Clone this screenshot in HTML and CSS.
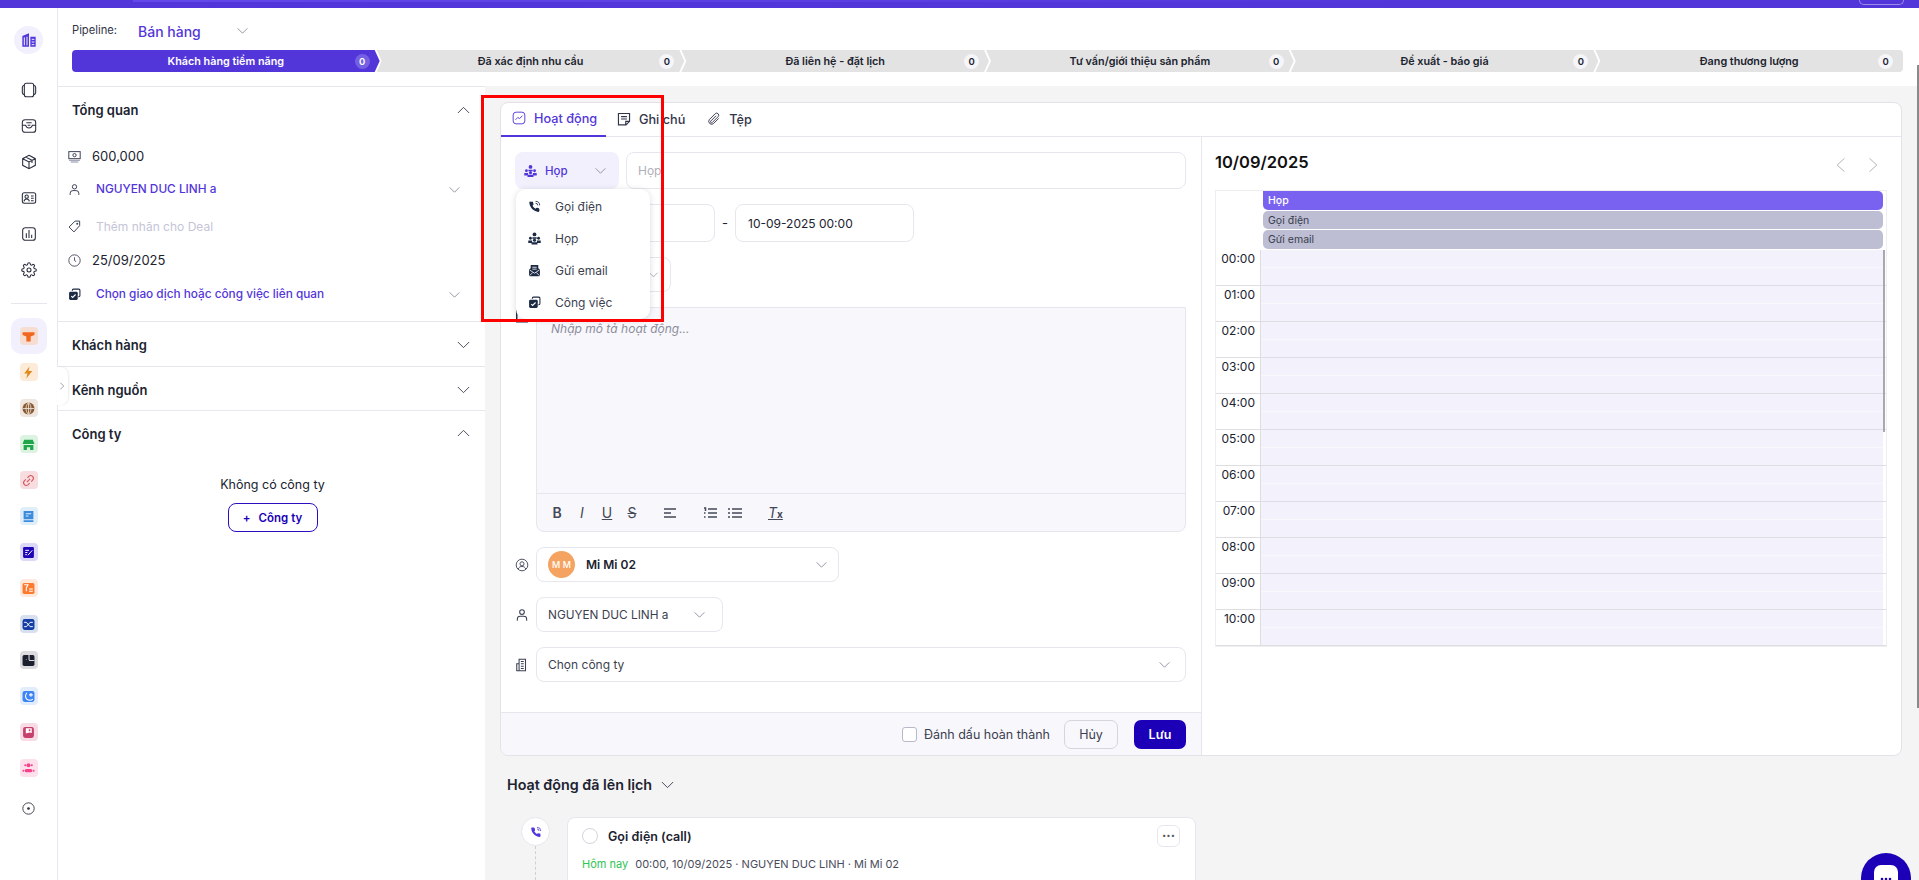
FILE: index.html
```html
<!DOCTYPE html>
<html lang="vi">
<head>
    <meta charset="UTF-8">
    <title>Deal - Bán hàng</title>
    <link rel="stylesheet" href="styles.css">
</head>
<body>
    <svg class="sprite" aria-hidden="true">
        <symbol id="chev" viewBox="0 0 24 24"><path d="M3 8l9 9 9-9" fill="none" stroke="currentColor" stroke-width="1.5"/></symbol>
        <symbol id="phone" viewBox="0 0 24 24"><path fill="currentColor" d="M21 17v3a2 2 0 0 1-2.2 2 18 18 0 0 1-8-2.9 18 18 0 0 1-5.5-5.5A18 18 0 0 1 2.4 5.2 2 2 0 0 1 4.4 3h3a2 2 0 0 1 2 1.7c.1 1 .4 1.8.7 2.600a2 2 0 0 1-.5 2.100L8.400 10.600a15 15 0 0 0 5.500 5.500l1.200-1.200a2 2 0 0 1 2.100-.5c.8.3 1.700.6 2.600.7A2 2 0 0 1 21 17z"/><path fill="none" stroke="currentColor" stroke-width="1.6" d="M14 2.500a7.500 7.500 0 0 1 7.500 7.500M14 6a4 4 0 0 1 4 4"/></symbol>
        <symbol id="meet" viewBox="0 0 24 24"><g fill="currentColor"><circle cx="12" cy="4.500" r="3.500"/><path d="M8 9.500h8v3H8z"/><circle cx="4.500" cy="11.500" r="2.600"/><circle cx="19.500" cy="11.500" r="2.600"/><circle cx="12" cy="15" r="2.800"/><path d="M0.500 15.500h7v5h-7zM16.500 15.500h7v5h-7zM6.500 19h11v4h-11z"/></g></symbol>
        <symbol id="mail" viewBox="0 0 24 24"><path fill="currentColor" d="M5 2h14v6l3 2v11a1.500 1.500 0 0 1-1.500 1.500h-17A1.500 1.500 0 0 1 2 21V10l3-2z"/><path fill="none" stroke="#fff" stroke-width="1.500" d="M8 6h8M8 9.500h8M3 11l9 6 9-6M3 21.500l6-6M21 21.500l-6-6"/></symbol>
        <symbol id="task" viewBox="0 0 24 24"><path fill="none" stroke="currentColor" stroke-width="2" d="M8 5V4a2 2 0 0 1 2-2h10a2 2 0 0 1 2 2v10a2 2 0 0 1-2 2h-1"/><rect x="2" y="7" width="16" height="15" rx="2.500" fill="currentColor"/><path fill="none" stroke="#fff" stroke-width="2" d="M6 15l2.500 2.500L14 12"/></symbol>
        <symbol id="user" viewBox="0 0 24 24"><g fill="none" stroke="currentColor" stroke-width="1.800"><circle cx="12" cy="7" r="4"/><path d="M4 22v-3a5 5 0 0 1 5-5h6a5 5 0 0 1 5 5v3"/></g></symbol>
    </svg>

    <div class="app">
        <div class="topbar">
            <div class="topbar-strip"></div>
            <div class="topbar-btn"></div>
        </div>

        <div class="shell">
            <nav class="rail">
                <div class="rail-logo">
                    <svg width="16" height="16" viewBox="0 0 24 24"><path fill="#5236d9" d="M2 6l10-4v20H2zM14 7h8v15h-8z"/><path stroke="#f1f0fc" stroke-width="1.500" d="M5 8v12M9 7v13M16 11h4M16 15h4M16 19h4"/></svg>
                </div>
                <div class="rail-group">
                    <svg class="rail-icon" viewBox="0 0 24 24"><rect x="5" y="2" width="14" height="20" rx="3"/><path d="M5 5a3.500 3.500 0 0 0-3 3v8a3.500 3.500 0 0 0 3 3M19 5a3.500 3.500 0 0 1 3 3v8a3.500 3.500 0 0 1-3 3"/></svg>
                    <svg class="rail-icon" viewBox="0 0 24 24"><rect x="2" y="2.500" width="20" height="19" rx="4"/><path d="M2 11h5c1 3 2.500 4 5 4s4-1 5-4h5M8 7h8M10 11h4"/></svg>
                    <svg class="rail-icon" viewBox="0 0 24 24"><path d="M12 2l9.500 5v10L12 22l-9.500-5V7zM2.500 7l9.500 5 9.500-5M12 12v10M7 4.500l9.500 5v4"/></svg>
                    <svg class="rail-icon" viewBox="0 0 24 24"><rect x="2" y="4" width="20" height="16" rx="3"/><circle cx="8.500" cy="10" r="2.500"/><path d="M4.500 17c.5-2.500 2-3.500 4-3.500s3.500 1 4 3.500M15 9h4M15 12.500h4M15 16h4"/></svg>
                    <svg class="rail-icon" viewBox="0 0 24 24"><rect x="2.500" y="2.500" width="19" height="19" rx="4"/><path d="M8 11v7M12 6v12M16 13v5"/></svg>
                    <svg class="rail-icon" viewBox="0 0 24 24"><circle cx="12" cy="12" r="3"/><path d="M19.400 15a1.650 1.650 0 0 0 .33 1.820l.06.06a2 2 0 0 1-2.830 2.830l-.06-.06a1.650 1.650 0 0 0-1.820-.33 1.650 1.650 0 0 0-1 1.510V21a2 2 0 0 1-4 0v-.09A1.650 1.650 0 0 0 9 19.400a1.650 1.650 0 0 0-1.820.33l-.06.06a2 2 0 0 1-2.830-2.830l.06-.06a1.650 1.650 0 0 0 .33-1.820 1.650 1.650 0 0 0-1.510-1H3a2 2 0 0 1 0-4h.09A1.650 1.650 0 0 0 4.600 9a1.650 1.650 0 0 0-.33-1.820l-.06-.06a2 2 0 0 1 2.830-2.830l.06.06a1.650 1.650 0 0 0 1.820.33H9a1.650 1.650 0 0 0 1-1.510V3a2 2 0 0 1 4 0v.09a1.650 1.650 0 0 0 1 1.510 1.650 1.650 0 0 0 1.820-.33l.06-.06a2 2 0 0 1 2.830 2.830l-.06.06a1.650 1.650 0 0 0-.33 1.820V9a1.650 1.650 0 0 0 1.510 1H21a2 2 0 0 1 0 4h-.09a1.650 1.650 0 0 0-1.510 1z"/></svg>
                </div>
                <div class="rail-divider"></div>
                <div class="rail-apps">
                    <div class="app-active"><span class="app-tile tile-orange"><svg viewBox="0 0 24 24"><path fill="currentColor" d="M1 4h22v5l-7 3v9H8v-9L1 9z"/></svg></span></div>
                    <span class="app-tile tile-amber"><svg viewBox="0 0 24 24"><path fill="currentColor" d="M14 1L4 14h6l-2 9 11-14h-7z"/></svg></span>
                    <span class="app-tile tile-brown"><svg viewBox="0 0 24 24"><circle cx="12" cy="12" r="11" fill="currentColor"/><path fill="none" stroke="#efe6df" stroke-width="1.500" d="M12 1v22M1 12h22M12 1c-6 5-6 17 0 22M12 1c6 5 6 17 0 22"/></svg></span>
                    <span class="app-tile tile-green"><svg viewBox="0 0 24 24"><path fill="currentColor" d="M4 3h16l3 8H1zM3 13h18v9h-6v-5H9v5H3z"/></svg></span>
                    <span class="app-tile tile-red"><svg viewBox="0 0 24 24"><path fill="none" stroke="currentColor" stroke-width="2" d="M10 7l3-3a5 5 0 0 1 7 7l-3 3M14 17l-3 3a5 5 0 0 1-7-7l3-3M9 15l6-6"/></svg></span>
                    <span class="app-tile tile-blue"><svg viewBox="0 0 24 24"><path fill="currentColor" d="M3 2h18v15H3zM3 19h18v3H3z"/><path stroke="#e0eefa" stroke-width="2" d="M7 7h10M7 11h5"/></svg></span>
                    <span class="app-tile tile-indigo"><svg viewBox="0 0 24 24"><rect x="2" y="2" width="20" height="20" rx="2" fill="currentColor"/><path fill="none" stroke="#fff" stroke-width="1.800" d="M6 8h7M6 12h4M6 16h3M11 17l8-9"/></svg></span>
                    <span class="app-tile tile-peach"><svg viewBox="0 0 24 24"><rect x="1" y="2" width="22" height="20" rx="3" fill="currentColor"/><path fill="none" stroke="#fff" stroke-width="2" d="M4 5h7l-3 6v6M13 13h7M13 17h7"/></svg></span>
                    <span class="app-tile tile-navy"><svg viewBox="0 0 24 24"><rect x="1" y="2" width="22" height="20" rx="4" fill="currentColor"/><path fill="none" stroke="#fff" stroke-width="1.800" d="M4 8h4l7 8h5M4 16h4l7-8h5"/></svg></span>
                    <span class="app-tile tile-dark"><svg viewBox="0 0 24 24"><rect x="1" y="2" width="22" height="20" rx="3" fill="currentColor"/><path stroke="#dcdcde" stroke-width="2" d="M13 2v9M13 12h10M8 10v1"/></svg></span>
                    <span class="app-tile tile-sky"><svg viewBox="0 0 24 24"><rect x="1" y="2" width="22" height="20" rx="4" fill="currentColor"/><path fill="none" stroke="#fff" stroke-width="2" d="M9 5c-3 4-3 9 0 12 3 2 8 2 11 0M13 9h7M16.500 5.500v7"/></svg></span>
                    <span class="app-tile tile-rose"><svg viewBox="0 0 24 24"><rect x="2" y="2" width="20" height="20" rx="4" fill="currentColor"/><path fill="#fff" d="M7 4h11v9l-4-1-7 2z"/><circle cx="14" cy="8" r="1.800" fill="#c73f6e"/></svg></span>
                    <span class="app-tile tile-pink"><svg viewBox="0 0 24 24"><g fill="currentColor"><circle cx="12" cy="6" r="3.500"/><circle cx="6" cy="6" r="2"/><circle cx="18" cy="6" r="2"/><rect x="5" y="13" width="14" height="6" rx="3"/><circle cx="2.500" cy="16" r="1.800"/><circle cx="21.500" cy="16" r="1.800"/></g></svg></span>
                </div>
                <svg class="rail-add" viewBox="0 0 24 24"><circle cx="12" cy="12" r="10.500" fill="none" stroke="currentColor" stroke-width="1.600"/><circle cx="12" cy="12" r="2.500" fill="currentColor"/></svg>
            </nav>

            <div class="content">
                <header class="pipeline">
                    <div class="pipeline-pick">
                        <span class="pipeline-label">Pipeline:</span>
                        <span class="pipeline-name">Bán hàng</span>
                        <svg class="chev-sm"><use href="#chev"/></svg>
                    </div>
                    <div class="stages">
                        <div class="stage stage-active"><span>Khách hàng tiềm năng</span><b>0</b></div>
                        <div class="stage"><span>Đã xác định nhu cầu</span><b>0</b></div>
                        <div class="stage"><span>Đã liên hệ - đặt lịch</span><b>0</b></div>
                        <div class="stage"><span>Tư vấn/giới thiệu sản phẩm</span><b>0</b></div>
                        <div class="stage"><span>Đề xuất - báo giá</span><b>0</b></div>
                        <div class="stage stage-last"><span>Đang thương lượng</span><b>0</b></div>
                    </div>
                </header>

                <div class="workspace">
                    <aside class="side">
                        <section class="side-sec sec-overview">
                            <div class="sec-head"><h3>Tổng quan</h3><svg class="chev-md up"><use href="#chev"/></svg></div>
                            <div class="info-row row-amount">
                                <svg class="info-icon" viewBox="0 0 24 24"><g fill="none" stroke="#3a3f52" stroke-width="1.800"><rect x="1.500" y="3" width="21" height="13"/><circle cx="12" cy="9.500" r="3"/></g><path stroke="#8a8fa3" stroke-width="2" d="M2 19h20M5 22h14"/></svg>
                                <span>600,000</span>
                            </div>
                            <div class="info-row row-contact">
                                <svg class="info-icon"><use href="#user"/></svg>
                                <span class="info-link">NGUYEN DUC LINH a</span>
                                <svg class="chev-sm"><use href="#chev"/></svg>
                            </div>
                            <div class="info-row row-tag">
                                <svg class="info-icon" viewBox="0 0 24 24"><path fill="none" stroke="#3a3f52" stroke-width="1.800" d="M13 2h8.500v8.500L11 22 2 13z"/><circle cx="17" cy="7" r="1.800" fill="#3a3f52"/></svg>
                                <span class="info-muted">Thêm nhãn cho Deal</span>
                            </div>
                            <div class="info-row row-date">
                                <svg class="info-icon" viewBox="0 0 24 24"><circle cx="12" cy="12" r="10.500" fill="none" stroke="#3a3f52" stroke-width="1.600"/><path fill="none" stroke="#3a3f52" stroke-width="1.600" d="M12 6v6l3 2"/></svg>
                                <span>25/09/2025</span>
                            </div>
                            <div class="info-row row-related">
                                <svg class="info-icon icon-dark"><use href="#task"/></svg>
                                <span class="info-link">Chọn giao dịch hoặc công việc liên quan</span>
                                <svg class="chev-sm"><use href="#chev"/></svg>
                            </div>
                        </section>
                        <section class="side-sec">
                            <div class="sec-head"><h3>Khách hàng</h3><svg class="chev-md"><use href="#chev"/></svg></div>
                        </section>
                        <section class="side-sec sec-source">
                            <div class="sec-head"><h3>Kênh nguồn</h3><svg class="chev-md"><use href="#chev"/></svg></div>
                        </section>
                        <section class="side-sec sec-company">
                            <div class="sec-head"><h3>Công ty</h3><svg class="chev-md up"><use href="#chev"/></svg></div>
                            <div class="empty-company">
                                <p>Không có công ty</p>
                                <button class="btn-outline"><span>+</span>Công ty</button>
                            </div>
                        </section>
                        <div class="side-handle"><svg class="chev-xs" viewBox="0 0 24 24"><path d="M8 4l8 8-8 8" fill="none" stroke="currentColor" stroke-width="2"/></svg></div>
                    </aside>

                    <main class="main">
                        <div class="card">
                            <div class="tabs">
                                <div class="tab tab-active">
                                    <svg viewBox="0 0 24 24"><rect x="2" y="2" width="20" height="20" rx="5" fill="none" stroke="currentColor" stroke-width="1.600"/><path d="M6 15l4-4 3 2 5-5" fill="none" stroke="currentColor" stroke-width="1.600"/></svg>
                                    Hoạt động
                                </div>
                                <div class="tab">
                                    <svg viewBox="0 0 24 24"><path d="M2.500 2.500h19V16l-6 6h-13zM15 22v-6h6.500M7 8h10M7 12h10" fill="none" stroke="currentColor" stroke-width="2"/></svg>
                                    Ghi chú
                                </div>
                                <div class="tab">
                                    <svg viewBox="0 0 24 24"><path d="M20 11l-9 9a5 5 0 0 1-7-7l10-10a3.300 3.300 0 0 1 5 5L9 18a1.600 1.600 0 0 1-2.500-2.500l9-9" fill="none" stroke="currentColor" stroke-width="1.600"/></svg>
                                    Tệp
                                </div>
                            </div>
                            <div class="card-body">
                                <div class="form-col">
                                    <div class="form">
                                        <div class="form-row">
                                            <div class="type-wrap">
                                                <div class="type-btn">
                                                    <svg class="type-icon"><use href="#meet"/></svg>
                                                    <span>Họp</span>
                                                    <svg class="chev-sm"><use href="#chev"/></svg>
                                                </div>
                                                <ul class="type-menu">
                                                    <li><svg><use href="#phone"/></svg>Gọi điện</li>
                                                    <li><svg><use href="#meet"/></svg>Họp</li>
                                                    <li><svg><use href="#mail"/></svg>Gửi email</li>
                                                    <li><svg><use href="#task"/></svg>Công việc</li>
                                                </ul>
                                            </div>
                                            <div class="input input-title">Họp</div>
                                        </div>
                                        <div class="form-row row-dates">
                                            <div class="input input-date date-start">10-09-2025 00:00</div>
                                            <span class="date-sep">-</span>
                                            <div class="input input-date">10-09-2025 00:00</div>
                                        </div>
                                        <div class="form-row row-guest">
                                            <div class="input input-short"><svg class="chev-xs-down"><use href="#chev"/></svg></div>
                                        </div>
                                        <div class="form-row row-editor">
                                            <svg class="field-icon field-note" viewBox="0 0 24 24"><path d="M3 2h14l4 4v16H3z" fill="none" stroke="currentColor" stroke-width="2.500"/></svg>
                                            <div class="editor">
                                                <div class="editor-text">Nhập mô tả hoạt động...</div>
                                                <div class="editor-tools">
                                                    <span class="tool tool-b">B</span>
                                                    <span class="tool tool-i">I</span>
                                                    <span class="tool tool-u">U</span>
                                                    <span class="tool tool-s">S</span>
                                                    <svg class="tool-svg gap-left" viewBox="0 0 14 14"><path d="M1 3h12M1 7h7M1 11h12" stroke="currentColor" stroke-width="1.500"/></svg>
                                                    <svg class="tool-svg gap-wide" viewBox="0 0 14 14"><path d="M5 3h9M5 7h9M5 11h9M1 2h1.500v3M1 7h1.500M1 11h1.500" stroke="currentColor" stroke-width="1.500" fill="none"/></svg>
                                                    <svg class="tool-svg" viewBox="0 0 14 14"><path d="M4 3h10M4 7h10M4 11h10M0 3h2M0 7h2M0 11h2" stroke="currentColor" stroke-width="1.500"/></svg>
                                                    <span class="tool tool-clear">T<small>x</small></span>
                                                </div>
                                            </div>
                                        </div>
                                        <div class="form-row">
                                            <svg class="field-icon" viewBox="0 0 24 24"><circle cx="12" cy="12" r="10" fill="none" stroke="currentColor" stroke-width="1.500"/><circle cx="12" cy="10" r="3.500" fill="none" stroke="currentColor" stroke-width="1.500"/><path d="M5.500 19c1-3 3.500-4.500 6.500-4.500s5.500 1.500 6.500 4.500" fill="none" stroke="currentColor" stroke-width="1.500"/></svg>
                                            <div class="input input-owner">
                                                <span class="avatar">M M</span>
                                                <strong>Mi Mi 02</strong>
                                                <svg class="chev-sm"><use href="#chev"/></svg>
                                            </div>
                                        </div>
                                        <div class="form-row">
                                            <svg class="field-icon"><use href="#user"/></svg>
                                            <div class="input input-contact">
                                                <span>NGUYEN DUC LINH a</span>
                                                <svg class="chev-sm"><use href="#chev"/></svg>
                                            </div>
                                        </div>
                                        <div class="form-row">
                                            <svg class="field-icon" viewBox="0 0 24 24"><path d="M7 2h11v20H7zM3 10h4v12H3zM10 6h5M10 10h5M10 14h5M10 18h5" fill="none" stroke="currentColor" stroke-width="1.800"/></svg>
                                            <div class="input input-company">
                                                <span>Chọn công ty</span>
                                                <svg class="chev-sm"><use href="#chev"/></svg>
                                            </div>
                                        </div>
                                    </div>
                                    <div class="form-foot">
                                        <label class="check"><i></i>Đánh dấu hoàn thành</label>
                                        <button class="btn-cancel">Hủy</button>
                                        <button class="btn-save">Lưu</button>
                                    </div>
                                </div>

                                <div class="calendar">
                                    <div class="cal-head">
                                        <h2>10/09/2025</h2>
                                        <div class="cal-nav">
                                            <svg viewBox="0 0 16 24"><path d="M14 2L3 12l11 10" fill="none" stroke="currentColor" stroke-width="1.300"/></svg>
                                            <svg viewBox="0 0 16 24"><path d="M2 2l11 10L2 22" fill="none" stroke="currentColor" stroke-width="1.300"/></svg>
                                        </div>
                                    </div>
                                    <div class="cal-grid">
                                        <div class="all-day">
                                            <div class="event event-on">Họp</div>
                                            <div class="event">Gọi điện</div>
                                            <div class="event">Gửi email</div>
                                        </div>
                                        <div class="hour"><span>00:00</span><div class="slots"></div></div>
                                        <div class="hour"><span>01:00</span><div class="slots"></div></div>
                                        <div class="hour"><span>02:00</span><div class="slots"></div></div>
                                        <div class="hour"><span>03:00</span><div class="slots"></div></div>
                                        <div class="hour"><span>04:00</span><div class="slots"></div></div>
                                        <div class="hour"><span>05:00</span><div class="slots"></div></div>
                                        <div class="hour"><span>06:00</span><div class="slots"></div></div>
                                        <div class="hour"><span>07:00</span><div class="slots"></div></div>
                                        <div class="hour"><span>08:00</span><div class="slots"></div></div>
                                        <div class="hour"><span>09:00</span><div class="slots"></div></div>
                                        <div class="hour"><span>10:00</span><div class="slots"></div></div>
                                        <div class="cal-scroll"></div>
                                    </div>
                                </div>
                            </div>
                        </div>

                        <h4 class="sched-title">Hoạt động đã lên lịch <svg class="chev-md"><use href="#chev"/></svg></h4>
                        <div class="sched-item">
                            <div class="sched-rail">
                                <span class="sched-dot"><svg><use href="#phone"/></svg></span>
                                <span class="sched-line"></span>
                            </div>
                            <div class="sched-card">
                                <div class="sched-top">
                                    <i class="radio"></i>
                                    <strong>Gọi điện (call)</strong>
                                    <span class="more">&middot;&middot;&middot;</span>
                                </div>
                                <div class="sched-meta"><em>Hôm nay</em>00:00, 10/09/2025 · NGUYEN DUC LINH · Mi Mi 02</div>
                            </div>
                        </div>
                    </main>
                </div>
            </div>
        </div>

        <!-- overlays -->
        <div class="page-scroll"></div>
        <div class="chat-bubble">
            <svg width="24" height="24" viewBox="0 0 24 24"><rect width="24" height="24" rx="7" fill="#fff"/><g fill="#1b00b8"><circle cx="8" cy="14" r="1.300"/><circle cx="12" cy="14" r="1.300"/><circle cx="16" cy="14" r="1.300"/></g></svg>
        </div>
        <div class="red-box"></div>
    </div>
</body>
</html>
```

FILE: styles.css
```css
* {
    box-sizing: border-box;
}
html, body {
    margin: 0;
    height: 100%;
    overflow: hidden;
}
body {
    font-family: Inter, "Noto Sans", sans-serif;
    font-size: 13px;
    color: #20232f;
    background: #fff;
}
h2, h3, h4, p, ul {
    margin: 0;
    padding: 0;
}
button {
    font-family: inherit;
    cursor: pointer;
}
.sprite {
    display: none;
}
.up {
    transform: rotate(180deg);
}
.chev-sm {
    width: 13px;
    height: 13px;
    color: #7d8192;
    flex: none;
}
.chev-md {
    width: 15px;
    height: 15px;
    color: #3f4354;
    flex: none;
}

.app {
    position: relative;
    height: 880px;
    display: flex;
    flex-direction: column;
    overflow: hidden;
}

/* top bar */
.topbar {
    height: 8px;
    flex: none;
    background: #5236d9;
    display: flex;
    align-items: flex-start;
}
.topbar-strip {
    flex: 1;
    height: 2px;
    margin-left: 133px;
    margin-right: 400px;
    background: linear-gradient(90deg, #6449ea, #5236d9);
}
.topbar-btn {
    width: 45px;
    height: 5px;
    margin-right: 15px;
    border: 1px solid #9a8ce8;
    border-top: 0;
    border-radius: 0 0 10px 10px;
}
.shell {
    flex: 1;
    display: flex;
    min-height: 0;
}

/* left rail */
.rail {
    width: 58px;
    flex: none;
    border-right: 1px solid #e6e6ef;
    display: flex;
    flex-direction: column;
    align-items: center;
    padding-top: 18px;
}
.rail-logo {
    width: 29px;
    height: 28px;
    border-radius: 50%;
    background: #f1f0fc;
    display: flex;
    align-items: center;
    justify-content: center;
}
.rail-group {
    display: flex;
    flex-direction: column;
    gap: 20px;
    margin-top: 28px;
}
.rail-icon {
    display: block;
    width: 16px;
    height: 16px;
    fill: none;
    stroke: #2b2f3e;
    stroke-width: 1.6;
}
.rail-divider {
    width: 36px;
    height: 1px;
    background: #e6e6ef;
    margin-top: 25px;
}
.rail-apps {
    display: flex;
    flex-direction: column;
    align-items: center;
    gap: 18px;
    margin-top: 14px;
}
.app-active {
    width: 36px;
    height: 36px;
    margin-bottom: -9px;
    border-radius: 10px;
    background: #f1f0fc;
    display: flex;
    align-items: center;
    justify-content: center;
}
.app-tile {
    width: 18px;
    height: 18px;
    flex: none;
    border-radius: 4px;
    display: flex;
    align-items: center;
    justify-content: center;
}
.app-tile svg {
    width: 13px;
    height: 13px;
}
.tile-orange { color: #f0671e; background: #f6ddd2; }
.tile-amber { color: #e08a1e; background: #fbebd8; }
.tile-brown { color: #8a5a32; background: #efe6df; }
.tile-green { color: #1fa64a; background: #dcf3e2; }
.tile-red { color: #d9535b; background: #f8dde0; }
.tile-blue { color: #3d8bdc; background: #e0eefa; }
.tile-indigo { color: #1f05b8; background: #dcd8f7; }
.tile-peach { color: #ff7a2e; background: #ffe8dc; }
.tile-navy { color: #123ea6; background: #d8e0f0; }
.tile-dark { color: #1b1f2e; background: #dcdcde; }
.tile-sky { color: #3d85f5; background: #e1ecfd; }
.tile-rose { color: #c73f6e; background: #f7dbe5; }
.tile-pink { color: #f5428a; background: #fde0ec; }
.rail-add {
    width: 13px;
    height: 13px;
    margin-top: 25px;
    color: #2b2f3e;
}

/* pipeline header */
.content {
    flex: 1;
    min-width: 0;
    display: flex;
    flex-direction: column;
}
.pipeline {
    height: 78px;
    flex: none;
    padding: 12px 16px 0 14px;
}
.pipeline-pick {
    display: flex;
    align-items: center;
    height: 20px;
}
.pipeline-label {
    width: 66px;
    font-size: 11.2px;
    color: #33364a;
}
.pipeline-name {
    width: 98px;
    padding-top: 2px;
    font-size: 14px;
    font-weight: 500;
    color: #5236d9;
}
.stages {
    display: flex;
    margin-top: 10px;
    height: 22px;
}
.stage {
    flex: 1;
    margin-left: -3px;
    padding: 0 12px;
    position: relative;
    display: flex;
    align-items: center;
    justify-content: center;
    font-size: 10.8px;
    font-weight: 600;
    color: #20232f;
    background: #e3e3e3;
    clip-path: polygon(0 0, calc(100% - 5px) 0, 100% 50%, calc(100% - 5px) 100%, 0 100%, 5px 50%);
}
.stage b {
    position: absolute;
    right: 10px;
    top: 3.5px;
    width: 15px;
    height: 15px;
    border-radius: 50%;
    background: #f5f5fa;
    font-size: 9.5px;
    font-weight: 600;
    line-height: 15px;
    text-align: center;
}
.stage-active {
    margin-left: 0;
    color: #fff;
    background: #5236d9;
    border-radius: 4px 0 0 4px;
    clip-path: polygon(0 0, calc(100% - 5px) 0, 100% 50%, calc(100% - 5px) 100%, 0 100%);
}
.stage-active b {
    background: #7560e4;
    color: #fff;
}
.stage-last {
    border-radius: 0 4px 4px 0;
    clip-path: polygon(0 0, 100% 0, 100% 100%, 0 100%, 5px 50%);
}

.workspace {
    flex: 1;
    display: flex;
    min-height: 0;
}

/* left panel */
.side {
    width: 427px;
    flex: none;
    position: relative;
    border-top: 1px solid #e6e6ef;
    background: #fff;
}
.side-sec {
    border-bottom: 1px solid #e6e6ef;
    height: 45px;
    padding: 0 14px;
}
.sec-overview {
    height: 235px;
}
.sec-source {
    height: 44px;
}
.sec-company {
    border-bottom: 0;
    height: auto;
}
.sec-head {
    height: 44px;
    padding-top: 1px;
    display: flex;
    align-items: center;
    justify-content: space-between;
}
.sec-overview .sec-head {
    height: 46px;
    padding-top: 0;
}
.sec-head h3 {
    font-size: 13px;
    font-weight: 600;
    color: #20232f;
}
.info-row {
    display: flex;
    align-items: center;
    height: 20px;
    margin-left: -4px;
}
.info-icon {
    width: 13px;
    height: 13px;
    color: #3a3f52;
    flex: none;
    margin-right: 11px;
}
.icon-dark {
    color: #1c2a44;
}
.row-amount {
    margin-top: 13px;
}
.row-contact {
    margin-top: 13px;
}
.row-tag {
    margin-top: 17px;
}
.row-date {
    margin-top: 14px;
}
.row-related {
    margin-top: 14px;
}
.row-contact .info-icon,
.row-tag .info-icon,
.row-related .info-icon {
    margin-right: 15px;
}
.info-link {
    flex: 1;
    font-size: 11.8px;
    font-weight: 500;
    color: #5236d9;
}
.info-muted {
    font-size: 12px;
    color: #c5c5d8;
}
.info-row .chev-sm {
    margin-right: 10px;
}
.empty-company {
    display: flex;
    flex-direction: column;
    align-items: center;
    padding-top: 20px;
    padding-left: 2px;
}
.empty-company p {
    font-size: 12.5px;
    line-height: 20px;
}
.btn-outline {
    margin-top: 8px;
    width: 90px;
    height: 29px;
    border: 1.5px solid #2a0fc0;
    border-radius: 8px;
    background: #fff;
    color: #1b00b8;
    font-size: 11.5px;
    font-weight: 600;
}
.btn-outline span {
    margin-right: 8px;
}
.side-handle {
    position: absolute;
    left: -1px;
    top: 280px;
    width: 11px;
    height: 38px;
    background: #fff;
    border-radius: 0 8px 8px 0;
    box-shadow: 1px 0 2px rgba(0, 0, 0, .08);
    display: flex;
    align-items: center;
    color: #8b8fa0;
}
.chev-xs {
    width: 10px;
    height: 10px;
}

/* main area */
.main {
    flex: 1;
    min-width: 0;
    background: #f4f4f5;
    padding: 16px 17px 0 15px;
}
.card {
    height: 654px;
    background: #fff;
    border: 1px solid #e2e2e8;
    border-radius: 8px;
    display: flex;
    flex-direction: column;
    overflow: hidden;
}
.tabs {
    height: 34px;
    flex: none;
    display: flex;
    border-bottom: 1px solid #e6e6ef;
}
.tab {
    display: flex;
    align-items: center;
    gap: 8px;
    height: 34px;
    padding: 0 11px 2px;
    font-size: 12.7px;
    font-weight: 500;
    color: #33364a;
    white-space: nowrap;
}
.tab svg {
    width: 14px;
    height: 14px;
    flex: none;
}
.tab-active {
    color: #5236d9;
    border-bottom: 2px solid #5236d9;
    width: 105px;
}
.card-body {
    flex: 1;
    display: flex;
    min-height: 0;
}
.form-col {
    width: 700px;
    flex: none;
    display: flex;
    flex-direction: column;
}
.form {
    flex: 1;
    display: flex;
    flex-direction: column;
    gap: 15px;
    padding: 15px 15px 0 14px;
}
.form-row {
    display: flex;
    align-items: center;
}
.type-wrap {
    position: relative;
    width: 104px;
    flex: none;
}
.type-btn {
    height: 37px;
    display: flex;
    align-items: center;
    padding: 0 12px 0 9px;
    border-radius: 8px;
    background: #f1f0fc;
    color: #5236d9;
    font-size: 11.5px;
    font-weight: 500;
}
.type-icon {
    width: 13px;
    height: 14px;
    margin-right: 8px;
}
.type-btn span {
    flex: 1;
}
.type-menu {
    position: absolute;
    left: 1px;
    top: 37px;
    z-index: 5;
    width: 134px;
    height: 130px;
    list-style: none;
    background: #fff;
    border-radius: 10px;
    box-shadow: 0 1px 6px rgba(30, 30, 70, .16);
    padding: 1px 0 0;
}
.type-menu li {
    height: 32px;
    display: flex;
    align-items: center;
    padding-left: 12px;
    font-size: 12px;
    color: #3d3f50;
}
.type-menu svg {
    width: 13px;
    height: 13px;
    margin-right: 14px;
    color: #1c2a44;
}
.input {
    height: 35px;
    border: 1px solid #e6e6ef;
    border-radius: 8px;
    background: #fff;
    display: flex;
    align-items: center;
    font-size: 12px;
}
.input-title {
    flex: 1;
    height: 37px;
    margin-left: 7px;
    padding-left: 11px;
    color: #b0b0b8;
}
.row-dates,
.row-guest,
.row-editor {
    padding-left: 21px;
}
.row-editor {
    position: relative;
}
.input-date {
    width: 179px;
    height: 38px;
    padding-left: 12px;
    color: #20232f;
}
.date-start {
    padding-left: 8px;
}
.date-sep {
    width: 20px;
    text-align: center;
}
.input-short {
    width: 135px;
    justify-content: flex-end;
    padding-right: 11px;
}
.chev-xs-down {
    width: 11px;
    height: 11px;
    color: #8b8fa0;
}
.field-icon {
    width: 14px;
    height: 14px;
    flex: none;
    margin-right: 7px;
    color: #3a3f52;
}
.field-note {
    position: absolute;
    left: 0;
    top: 2px;
    color: #1c2a44;
}
.editor {
    flex: 1;
    height: 225px;
    background: #f7f7fc;
    border: 1px solid #e6e6ef;
    border-radius: 0 0 8px 8px;
    display: flex;
    flex-direction: column;
}
.editor-text {
    flex: 1;
    padding: 13px 14px;
    font-size: 12px;
    font-style: italic;
    color: #8d8d9b;
}
.editor-tools {
    height: 38px;
    flex: none;
    border-top: 1px solid #e6e6ef;
    display: flex;
    align-items: center;
    gap: 11px;
    padding-left: 13px;
    color: #444857;
}
.tool {
    width: 14px;
    text-align: center;
    font-size: 14px;
    line-height: 1;
}
.tool-b {
    font-weight: 600;
}
.tool-i {
    font-style: italic;
}
.tool-u {
    text-decoration: underline;
}
.tool-s {
    text-decoration: line-through;
}
.tool-clear {
    margin-left: 15px;
    font-style: italic;
    text-decoration: underline;
}
.tool-clear small {
    font-size: 10px;
    font-weight: 700;
    font-style: normal;
}
.tool-svg {
    width: 14px;
    height: 14px;
}
.gap-left {
    margin-left: 13px;
}
.gap-wide {
    margin-left: 15px;
}
.input-owner {
    width: 303px;
    padding: 0 10px 0 11px;
}
.avatar {
    width: 27px;
    height: 27px;
    border-radius: 50%;
    background: #f4a460;
    color: #fff;
    font-size: 9px;
    font-weight: 500;
    text-align: center;
    line-height: 27px;
    flex: none;
    margin-right: 11px;
}
.input-owner strong {
    flex: 1;
    font-size: 12px;
    font-weight: 600;
}
.input-contact {
    width: 187px;
    padding: 0 16px 0 11px;
    justify-content: space-between;
    font-size: 11.8px;
    color: #3d3f50;
}
.input-company {
    flex: 1;
    padding: 0 14px 0 11px;
    justify-content: space-between;
    color: #3d3f50;
}
.form-foot {
    height: 43px;
    flex: none;
    background: #f7f7fc;
    border-top: 1px solid #e6e6ef;
    display: flex;
    align-items: center;
    justify-content: flex-end;
    padding: 1px 15px 0 0;
    font-size: 12.5px;
}
.check {
    display: flex;
    align-items: center;
    gap: 7px;
    color: #3d3f50;
    margin-right: 14px;
}
.check i {
    width: 15px;
    height: 15px;
    background: #fff;
    border: 1px solid #b8b8c8;
    border-radius: 3px;
}
.btn-cancel,
.btn-save {
    width: 54px;
    height: 29px;
    border-radius: 7px;
    font-size: 12.5px;
}
.btn-cancel {
    background: #f7f7fc;
    border: 1px solid #d5d5de;
    color: #3d3f50;
}
.btn-save {
    width: 52px;
    margin-left: 16px;
    border: 0;
    background: #1b00b8;
    color: #fff;
    font-weight: 600;
}

/* calendar */
.calendar {
    flex: 1;
    min-width: 0;
    border-left: 1px solid #e6e6ef;
    padding: 0 14px 0 13px;
}
.cal-head {
    height: 53px;
    display: flex;
    align-items: center;
    justify-content: space-between;
    padding-right: 8px;
}
.cal-head h2 {
    font-size: 16.5px;
    font-weight: 600;
    color: #111;
    margin-top: -4px;
}
.cal-nav {
    display: flex;
    gap: 22px;
    color: #a8a8b0;
    margin-top: 3px;
}
.cal-nav svg {
    width: 11px;
    height: 16px;
}
.cal-grid {
    position: relative;
    border: 1px solid #eeeef0;
    height: 457px;
    overflow: hidden;
}
.all-day {
    height: 59px;
    padding: 0 3px 0 47px;
    display: flex;
    flex-direction: column;
    gap: 1px;
}
.event {
    height: 18.5px;
    border-radius: 5px;
    background: #bdbdd4;
    color: #3a3d4d;
    font-size: 10.5px;
    line-height: 19px;
    padding-left: 5px;
}
.event-on {
    background: #7a62f0;
    color: #fff;
    font-weight: 500;
    border-radius: 0 5px 5px 5px;
}
.hour {
    height: 36px;
    display: flex;
    border-bottom: 1px solid #dedee2;
    padding-right: 3px;
}
.hour span {
    width: 45px;
    flex: none;
    text-align: right;
    padding: 1px 5px 0 0;
    font-size: 12px;
    line-height: 16px;
    color: #20232f;
    border-right: 1px solid #dedee2;
}
.slots {
    flex: 1;
    background: linear-gradient(#f3f1fb 17px, #f9f8fd 17px, #f9f8fd 18px, #f3f1fb 18px);
}
.cal-scroll {
    position: absolute;
    right: 1px;
    top: 59px;
    width: 2px;
    height: 182px;
    background: #a8a8b0;
}

/* scheduled list */
.sched-title {
    display: flex;
    align-items: center;
    gap: 8px;
    margin: 17px 0 22px 7px;
    height: 22px;
    font-size: 14.3px;
    font-weight: 600;
    color: #20232f;
}
.sched-item {
    display: flex;
    padding-left: 21px;
}
.sched-rail {
    width: 29px;
    flex: none;
    display: flex;
    flex-direction: column;
    align-items: center;
}
.sched-dot {
    width: 29px;
    height: 29px;
    border-radius: 50%;
    background: #fff;
    border: 1px solid #e6e6ef;
    display: flex;
    align-items: center;
    justify-content: center;
    color: #5236d9;
}
.sched-dot svg {
    width: 12px;
    height: 12px;
}
.sched-line {
    height: 60px;
    border-left: 1px dashed #cfcfd8;
}
.sched-card {
    width: 629px;
    height: 100px;
    margin-left: 17px;
    background: #fff;
    border: 1px solid #e6e6ef;
    border-radius: 8px;
    padding: 7px 15px 0 14px;
}
.sched-top {
    display: flex;
    align-items: center;
    height: 22px;
}
.radio {
    width: 16px;
    height: 16px;
    border: 1px solid #d5d5de;
    border-radius: 50%;
    margin-right: 10px;
}
.sched-top strong {
    flex: 1;
    font-size: 12.5px;
    font-weight: 600;
}
.more {
    width: 23px;
    height: 22px;
    border: 1px solid #e6e6ef;
    border-radius: 6px;
    text-align: center;
    line-height: 19px;
    font-weight: 700;
    color: #555;
}
.sched-meta {
    margin-top: 10px;
    font-size: 11px;
    color: #4a4c5c;
}
.sched-meta em {
    font-style: normal;
    color: #2fc455;
    margin-right: 7px;
}

/* overlays */
.page-scroll {
    position: absolute;
    right: 0;
    top: 65px;
    width: 2px;
    height: 643px;
    background: #8a8a8a;
}
.chat-bubble {
    position: absolute;
    left: 1861px;
    top: 853px;
    width: 50px;
    height: 50px;
    border-radius: 50%;
    background: #1b00b8;
    display: flex;
    justify-content: center;
    padding-top: 12px;
}
.red-box {
    position: absolute;
    left: 481px;
    top: 95px;
    width: 183px;
    height: 227px;
    border: 3px solid #f00;
    z-index: 10;
}
```
